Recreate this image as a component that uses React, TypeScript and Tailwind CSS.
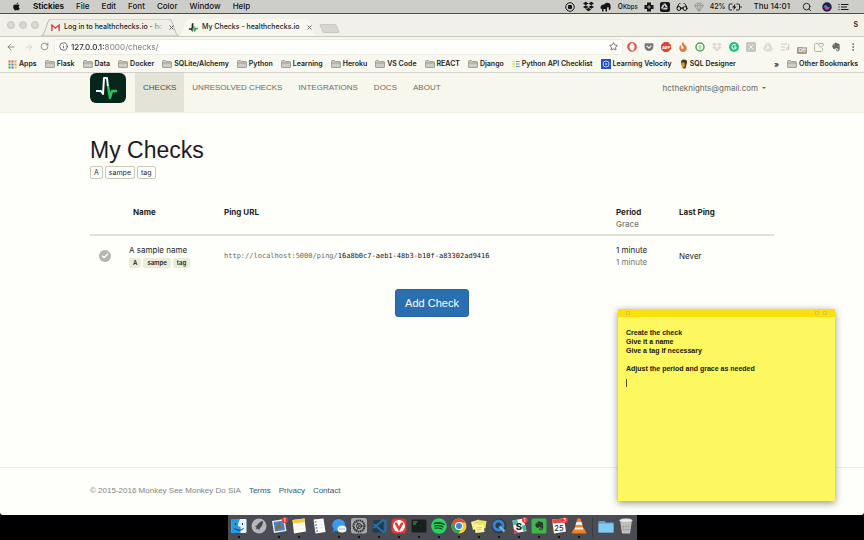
import React from "react";
import { FaApple, FaDropbox, FaGoogleDrive, FaEvernote, FaSpotify, FaOpera, FaGetPocket, FaFire } from "react-icons/fa";
import { ArrowLeft, ArrowRight, RotateCw, Info, Star, Search, Glasses, Gem, EllipsisVertical, ListMusic, Check, X } from "lucide-react";

function Folder() {
  return (
    <svg viewBox="0 0 20 16" className="h-2 w-[10px] shrink-0">
      <path d="M1 14V3q0-2 2-2h4l2 2h8q2 0 2 2v9q0 1-1 1H2q-1 0-1-1z" fill="#cdcdc6" stroke="#92928c" strokeWidth="1.6" />
      <path d="M1 6h18" stroke="#92928c" strokeWidth="1.6" />
    </svg>
  );
}

function PulseGlyph({ className }: { className: string }) {
  return (
    <svg viewBox="0 0 36 30" className={className}>
      <rect width="36" height="30" rx="6" fill="#05261a" />
      <path d="M6 18h5l2 3 1-16h3l1 9" fill="none" stroke="#fff" strokeWidth="2" strokeLinejoin="round" />
      <path d="M18 13l2 12 2-7h5" fill="none" stroke="#2ec05f" strokeWidth="2.4" strokeLinejoin="round" />
    </svg>
  );
}

function Elephant() {
  return (
    <svg viewBox="0 0 22 20" className="h-[10px] w-[11px]">
      <path d="M1 12q0-7 7-7l4-3q7-2 9 4 1 5-1 10h-2l-1-6-3 1v8h-3v-5H7v5H4v-6l-2 1z" fill="#141414" />
    </svg>
  );
}

function MenuBar() {
  const menus = ["File", "Edit", "Font", "Color", "Window", "Help"];
  return (
    <header className="flex h-[14px] items-center justify-between border-b border-[#4c4c48] bg-[#cdcdca] pl-3 pr-[15px] text-[8px] leading-[13px] font-medium text-[#151515]">
      <nav className="flex items-center gap-3">
        <FaApple className="size-[9px]" />
        <button className="font-bold">Stickies</button>
        {menus.map((m) => (
          <button key={m}>{m}</button>
        ))}
      </nav>
      <div className="flex items-center gap-[6px]">
        <svg viewBox="0 0 20 20" className="size-[10px]">
          <circle cx="10" cy="10" r="8.5" fill="none" stroke="#151515" strokeWidth="2" />
          <rect x="6" y="6" width="8" height="8" rx="2" fill="#151515" />
        </svg>
        <FaDropbox className="ml-[2px] size-[11px]" />
        <Elephant />
        <span className="flex items-baseline pl-px">0<small className="text-[6px]">Kbps</small></span>
        <svg viewBox="0 0 20 20" className="size-[10px]">
          <path d="M6 1h8v5h5v8h-5v5H6v-5H1V6h5z" fill="#151515" />
          <path d="M10 6v8M6 10h8" stroke="#cdcdca" strokeWidth="1.5" />
        </svg>
        <span className="flex size-[10px] items-center justify-center rounded-[2px] bg-[#151515] text-[#cdcdca]">
          <FaGoogleDrive className="size-[7px]" />
        </span>
        <Glasses className="size-3" />
        <Gem className="size-[10px] text-[#92928e]" />
        <span className="text-[7px]">42%</span>
        <svg viewBox="0 0 28 16" className="-ml-1 h-2 w-[14px]">
          <path d="M9 2H4Q2 2 2 4v8q0 2 2 2h4M17 2h4q2 0 2 2v8q0 2-2 2h-5M26 6v4" fill="none" stroke="#151515" strokeWidth="1.8" />
          <path d="M15 1l-7 8h4l-2 6 7-8h-4z" fill="#151515" />
        </svg>
        <time className="ml-[6px]">Thu 14:01</time>
        <Search className="ml-[6px] size-[10px]" />
        <svg viewBox="0 0 20 20" className="ml-1 size-[10px]">
          <circle cx="10" cy="10" r="9.5" fill="#23213f" />
          <path d="M3 11q3-8 7-3t7 0q-2 8-7 5t-7-2z" fill="#5a7be0" />
          <path d="M5 13q5-5 10 0-5 5-10 0z" fill="#d04d96" />
        </svg>
        <svg viewBox="0 0 22 16" className="h-2 w-[11px]">
          <path d="M1 3h2M6 3h15M1 8h2M6 8h12M1 13h2M6 13h15" stroke="#151515" strokeWidth="2" />
        </svg>
      </div>
    </header>
  );
}

function Tab({ title, active, icon }: { title: string; active?: boolean; icon: React.ReactNode }) {
  return (
    <div className="relative flex h-[17px] w-[138px] items-center gap-1 pl-[10px] pr-1">
      <svg viewBox="0 0 138 17" preserveAspectRatio="none" className="absolute inset-0 size-full">
        <path d="M0 17q2 0 3-3L7 3q1-3 3-3h118q2 0 3 3l4 11q1 3 3 3z" fill={active ? "#f8f8f1" : "#efefe5"} stroke={active ? "none" : "#bcbcb4"} strokeWidth="1" />
      </svg>
      <span className="relative shrink-0">{icon}</span>
      <button className="relative flex-1 text-left whitespace-nowrap">
        {title}
        {!active && <span className="absolute inset-y-0 right-0 w-4 bg-linear-to-r from-transparent to-[#efefe5]" />}
      </button>
      <button aria-label="Close tab" className="relative text-[#555]"><X className="size-[7px]" strokeWidth={3} /></button>
    </div>
  );
}

function TabStrip() {
  return (
    <div className="flex h-[23px] items-end border-b border-[#cacac3] bg-[#f1f1e8] pr-[6px] text-[7px] font-medium text-[#222]">
      <div className="flex gap-1 self-center pl-[7px] pr-[2px]">
        {[0, 1, 2].map((n) => (
          <span key={n} className="size-2 rounded-full border border-[#c9c9c3] bg-[#d8d8d2]" />
        ))}
      </div>
      <Tab
        title="Log in to healthchecks.io - hc"
        icon={
          <svg viewBox="0 0 20 15" className="h-[7px] w-[9px]">
            <path d="M2 15V2l8 7 8-7v13" fill="#fff" stroke="#d93a34" strokeWidth="3" />
          </svg>
        }
      />
      <Tab
        active
        title="My Checks - healthchecks.io"
        icon={
          <svg viewBox="0 0 18 18" className="size-[9px]">
            <path d="M0 12h5l1 2 1-12h2" fill="none" stroke="#222" strokeWidth="2.8" />
            <path d="M9 5l2 12 2-6h5" fill="none" stroke="#28a655" strokeWidth="2.8" />
          </svg>
        }
      />
      <button aria-label="New tab" className="mb-[3px] ml-[4px] h-[9px] w-[17px] skew-x-[22deg] rounded-[2px] border border-[#c8c8c0] bg-[#d7d7cf]" />
      <button className="ml-auto self-center text-[7px] font-semibold">S</button>
    </div>
  );
}

function Toolbar() {
  return (
    <div className="flex h-[19px] items-center bg-[#f8f8f1] pl-[6px] pr-[6px] text-[#777]">
      <button aria-label="Back" className="mr-2"><ArrowLeft className="size-[10px]" /></button>
      <button aria-label="Forward" className="mr-[6px] text-[#d2d2cc]"><ArrowRight className="size-[10px]" /></button>
      <button aria-label="Reload"><RotateCw className="size-[9px]" /></button>
      <div className="ml-[5px] flex h-4 flex-1 items-center gap-[3px] rounded-[2px] border border-[#ecece4] bg-[#fefefb] px-1">
        <Info className="size-[9px] text-[#444]" />
        <input
          aria-label="Address"
          defaultValue="127.0.0.1:8000/checks/"
          className="min-w-0 flex-1 bg-linear-to-r from-[#222] from-[33px] to-[#85857f] to-[33px] bg-clip-text text-[8px] leading-3 font-medium text-transparent outline-none"
        />
        <Star className="size-[9px] text-[#444]" />
      </div>
      <div className="ml-1 flex items-center gap-[7px] text-[#8c8c86]">
        <FaOpera className="size-[10px] text-[#e2534b]" />
        <FaGetPocket className="size-[10px] text-[#777]" />
        <svg viewBox="0 0 20 20" className="size-[10px]">
          <path d="M6 0h8l6 6v8l-6 6H6l-6-6V6z" fill="#dc4438" />
          <text x="10" y="13" textAnchor="middle" fontSize="8" fontWeight="700" fill="#fff">ABP</text>
        </svg>
        <FaFire className="size-[10px] text-[#e77a3c]" />
        <svg viewBox="0 0 20 20" className="size-[10px]">
          <circle cx="10" cy="10" r="8" fill="none" stroke="#4aa552" strokeWidth="3" />
          <rect x="7" y="6" width="6" height="8" rx="2" fill="#b9d9b6" />
        </svg>
        <FaDropbox className="size-[10px] text-[#d9d9d1]" />
        <svg viewBox="0 0 20 20" className="size-[10px]">
          <circle cx="10" cy="10" r="10" fill="#2bbd83" />
          <path d="M14 6q-6-4-8 3 0 8 8 4v-3h-4" fill="none" stroke="#fff" strokeWidth="2" />
        </svg>
        <svg viewBox="0 0 20 20" className="size-[10px]">
          <rect width="20" height="20" rx="3" fill="#c6c6bf" />
          <path d="M5 5l10 10M15 5L5 15" stroke="#efefe8" strokeWidth="2" />
        </svg>
        <FaGoogleDrive className="size-[10px] text-[#dcdcd5]" />
        <ListMusic className="size-[10px] text-[#c4c4bd]" />
        <span className="mt-2 rounded-[1px] bg-[#a89a83] px-px text-[5px] leading-[7px] font-semibold text-white">Off</span>
        <svg viewBox="0 0 20 20" className="size-[10px]">
          <path d="M8 3H3q-2 0-2 2v12q0 2 2 2h12q2 0 2-2v-5" fill="none" stroke="#b5b5ae" strokeWidth="2" />
          <path d="M14 11L9 6q0-5 5-3 5-2 5 3z" fill="none" stroke="#aaa" strokeWidth="2" />
        </svg>
        <FaEvernote className="size-[10px] text-[#686862]" />
        <EllipsisVertical className="size-[10px] text-[#555]" />
      </div>
    </div>
  );
}

function Bookmark({ label, icon }: { label: string; icon?: React.ReactNode }) {
  return (
    <a href="#" className="flex shrink-0 items-center gap-[2px]">
      {icon ?? <Folder />}
      {label}
    </a>
  );
}

function BookmarksBar() {
  const folders = ["Flask", "Data", "Docker", "SQLite/Alchemy", "Python", "Learning", "Heroku", "VS Code", "REACT", "Django"];
  const dots = ["#d9534f", "#d9534f", "#e8a33c", "#4a9e58", "#4a76c9", "#e8a33c", "#4a9e58", "#4a76c9", "#e8c13c"];
  return (
    <nav aria-label="Bookmarks" className="flex h-[17px] items-center gap-2 border-b border-[#d3d3cb] bg-[#f8f8f1] pl-2 pr-[6px] text-[7px] font-semibold text-[#1d1d1d]">
      <Bookmark
        label="Apps"
        icon={
          <svg viewBox="0 0 9 9" className="size-[9px]">
            {dots.map((c, i) => (
              <rect key={i} x={(i % 3) * 3 + 0.5} y={Math.floor(i / 3) * 3 + 0.5} width="2" height="2" fill={c} />
            ))}
          </svg>
        }
      />
      {folders.map((f) => (
        <Bookmark key={f} label={f} />
      ))}
      <Bookmark
        label="Python API Checklist"
        icon={
          <svg viewBox="0 0 16 16" className="size-2">
            <path d="M1 3h5M1 8h5M1 13h5" stroke="#eadb55" strokeWidth="3" />
            <path d="M8 3h7M8 8h7M8 13h7" stroke="#4a8bc4" strokeWidth="2" />
          </svg>
        }
      />
      <Bookmark
        label="Learning Velocity"
        icon={
          <svg viewBox="0 0 20 20" className="size-[10px]">
            <rect width="20" height="20" fill="#2450c8" />
            <circle cx="10" cy="10" r="6" fill="none" stroke="#b7cdf8" strokeWidth="2" />
            <circle cx="10" cy="10" r="2" fill="#b7cdf8" />
          </svg>
        }
      />
      <Bookmark
        label="SQL Designer"
        icon={
          <svg viewBox="0 0 16 20" className="h-[10px] w-2">
            <path d="M2 8Q1 1 8 1t6 6l-1 4-2 8H6z" fill="#4f3519" />
            <path d="M3 7h6l1 7-4 4q-4-3-3-11z" fill="#d59a35" />
          </svg>
        }
      />
      <button aria-label="More bookmarks" className="ml-auto text-[8px]">»</button>
      <Bookmark label="Other Bookmarks" />
    </nav>
  );
}

function SiteNav() {
  const links = ["CHECKS", "UNRESOLVED CHECKS", "INTEGRATIONS", "DOCS", "ABOUT"];
  return (
    <div className="border-b border-[#ededdf] bg-[#f7f7ee]">
      <div className="mx-auto flex h-[39px] w-full max-w-[684px] items-start text-[8px] leading-[30px] text-[#6b6b66]">
        <a href="#" aria-label="healthchecks.io" className="mr-[9px]">
          <PulseGlyph className="h-[30px] w-9" />
        </a>
        <nav className="flex h-full font-['Liberation_Sans',Arial,sans-serif]">
          {links.map((l, i) => (
            <a key={l} href="#" className={i === 0 ? "bg-[#e3e3d8] px-2 text-[#4c4c48]" : "px-2"}>
              {l}
            </a>
          ))}
        </nav>
        <button className="ml-auto flex items-center gap-1 pr-2 text-[8px]">
          hctheknights@gmail.com
          <span className="border-x-2 border-t-2 border-x-transparent border-t-[#6b6b66]" />
        </button>
      </div>
    </div>
  );
}

function ChecksPage() {
  const tags = ["A", "sampe", "tag"];
  return (
    <main className="mx-auto w-full max-w-[684px] flex-1 pt-6 text-[8px] leading-3 text-[#1f1f1f]">
      <h1 className="font-['Liberation_Sans',Arial,sans-serif] text-[23px] leading-[26px] text-[#1c1c1c]">My Checks</h1>
      <div className="mt-[3px] flex gap-[2px]">
        {tags.map((t) => (
          <button key={t} className="h-[13px] rounded-[2px] border border-[#c9c9b4] bg-white px-[3px] text-[7px] leading-[11px]">
            {t}
          </button>
        ))}
      </div>
      <table className="mt-[27px] w-full table-fixed text-left">
        <colgroup>
          <col className="w-[39px]" />
          <col className="w-[95px]" />
          <col />
          <col className="w-[63px]" />
          <col className="w-[95px]" />
        </colgroup>
        <thead>
          <tr className="border-b-2 border-[#e0e0d3] align-top">
            <th></th>
            <th className="pl-1">Name</th>
            <th>Ping URL</th>
            <th className="pb-1">
              Period
              <span className="block font-medium text-[#77776f]">Grace</span>
            </th>
            <th>Last Ping</th>
          </tr>
        </thead>
        <tbody>
          <tr>
            <td className="pl-[9px]">
              <span className="flex size-3 items-center justify-center rounded-full bg-[#b5b5ae]">
                <Check className="size-2 text-white" strokeWidth={4} />
              </span>
            </td>
            <td className="py-2">
              A sample name
              <span className="flex gap-[2px] pt-[2px]">
                {tags.map((t) => (
                  <span key={t} className="rounded-[2px] bg-[#ececd6] px-1 text-[6px] leading-[10px] font-semibold">
                    {t}
                  </span>
                ))}
              </span>
            </td>
            <td className="font-['DejaVu_Sans_Mono',monospace] text-[7px] text-[#6b6b64]">
              http://localhost:5000/ping/<span className="text-[#111]">16a8b0c7-aeb1-48b3-b10f-a83302ad9416</span>
            </td>
            <td>
              1 minute
              <span className="block text-[#77776f]">1 minute</span>
            </td>
            <td>Never</td>
          </tr>
        </tbody>
      </table>
      <div className="flex justify-center pt-[13px]">
        <button className="h-7 rounded-[3px] border border-[#2a63a0] bg-[#2a6fb0] px-[9px] font-['Liberation_Sans',Arial,sans-serif] text-[11px] text-white">
          Add Check
        </button>
      </div>
    </main>
  );
}

function SiteFooter() {
  return (
    <footer className="h-12 border-t border-[#ecece4]">
      <div className="mx-auto flex w-full max-w-[684px] gap-2 pt-[17px] font-['Liberation_Sans',Arial,sans-serif] text-[8px] leading-3 text-[#85857e]">
        <span>© 2015-2016 Monkey See Monkey Do SIA</span>
        {["Terms", "Privacy", "Contact"].map((l) => (
          <a key={l} href="#" className="text-[#2a5a78]">{l}</a>
        ))}
      </div>
    </footer>
  );
}

function StickyNote() {
  return (
    <section aria-label="Sticky note" className="absolute top-[309px] right-[29px] flex h-[192px] w-[217px] flex-col bg-[#fdf85f] shadow-[0_2px_7px_rgba(60,60,40,0.55)]">
      <div className="flex h-2 items-center gap-1 bg-[#fbe00e] px-2">
        <button aria-label="Close note" className="mr-auto h-[4px] w-[4px] border border-[#d9c63f]" />
        <button aria-label="Zoom note" className="h-[4px] w-[4px] border border-[#d9c63f]" />
        <button aria-label="Collapse note" className="h-[4px] w-[4px] border border-[#d9c63f]" />
      </div>
      <label className="relative flex flex-1 px-2 pt-[11px]">
        <span className="sr-only">Note text</span>
        <textarea
          defaultValue={"Create the check\nGive it a name\nGive a tag if necessary\n\nAdjust the period and grace as needed\n"}
          className="flex-1 resize-none font-['Liberation_Sans',Arial,sans-serif] text-[7px] leading-[9px] font-bold text-[#16160c] outline-none"
        />
        <span className="absolute top-[62px] left-2 h-2 w-px bg-[#4a4a22]" />
      </label>
    </section>
  );
}

function DockItem({ name, running = true, badge, children }: { name: string; running?: boolean; badge?: string; children: React.ReactNode }) {
  return (
    <button aria-label={name} className="relative flex flex-col items-center">
      <svg viewBox="0 0 32 32" className="size-4">{children}</svg>
      <span className={running ? "mt-[2px] size-[2px] rounded-full bg-black" : "mt-[2px] size-[2px]"} />
      {badge && <span className="absolute -top-px -right-px size-[6px] rounded-full bg-[#ee3436] text-center text-[5px] leading-[6px] text-white">{badge}</span>}
    </button>
  );
}

function Dock() {
  return (
    <div className="flex justify-center bg-black">
      <div className="flex h-[25px] items-start gap-1 bg-[#4b4b53] px-[3px] pt-[3px]">
        <DockItem name="Finder">
          <rect x="1" y="2" width="30" height="28" rx="2" fill="#e9f1f8" />
          <path d="M3 2h15q-5 8-4 15h5v13H3q-2 0-2-2V4q0-2 2-2z" fill="#219ae8" />
          <path d="M7 21q9 7 18 0M9 10v4M23 10v4" fill="none" stroke="#17304f" strokeWidth="2" />
        </DockItem>
        <DockItem name="Launchpad" running={false}>
          <circle cx="16" cy="16" r="15" fill="#b3b6ba" />
          <path d="M24 6q-8 1-12 9l-4 1 3 3-1 4 4-2 2 4 2-5q6-5 6-14z" fill="#454a50" />
        </DockItem>
        <DockItem name="Mail" badge="1">
          <path d="M2 6l25-4 4 24-25 4z" fill="#f1f4f7" />
          <path d="M5 8l20-3 3 19-20 3z" fill="#4387cb" />
          <path d="M8 20l9-12 2 7 6 3-8 2-4 4z" fill="#8c6b41" />
        </DockItem>
        <DockItem name="Notes">
          <path d="M3 4l24-3 3 26-24 4z" fill="#fffdf1" />
          <path d="M3 4l24-3 1 7-24 3z" fill="#fdc82d" />
          <path d="M7 17l18-2M8 23l18-2" stroke="#ddd" strokeWidth="1" />
        </DockItem>
        <DockItem name="Reminders" running={false}>
          <path d="M5 3l20-2 4 27-20 3z" fill="#fff" />
          <circle cx="9" cy="8" r="2" fill="#ef7d38" />
          <circle cx="10" cy="14" r="2" fill="#49a8ea" />
          <circle cx="11" cy="20" r="2" fill="#50bb57" />
          <circle cx="12" cy="26" r="2" fill="#c965bb" />
          <path d="M14 8l10-1M15 14l10-1M16 20l10-1" stroke="#ccc" />
        </DockItem>
        <DockItem name="Messages">
          <path d="M14 2a14 12 0 1 1-5 23l-6 3 3-6A13 12 0 0 1 14 2z" fill="#3699f5" />
          <ellipse cx="22" cy="22" rx="9" ry="7" fill="#f5faff" />
          <path d="M17 22h2M21 22h2M25 22h2" stroke="#3976c2" strokeWidth="2" />
        </DockItem>
        <DockItem name="System Preferences">
          <rect width="32" height="31" rx="5" fill="#a7a8ac" />
          <circle cx="16" cy="16" r="11" fill="none" stroke="#333438" strokeWidth="4" strokeDasharray="3 1" />
          <circle cx="16" cy="16" r="5" fill="none" stroke="#333438" strokeWidth="2" />
          <path d="M16 16l10 0M16 16l-5-9M16 16l-5 9" stroke="#333438" strokeWidth="2" />
        </DockItem>
        <DockItem name="Visual Studio Code">
          <path d="M5 4h20v25H3z" fill="#24384f" />
          <path d="M24 4L10 16l14 12 5-2V6zM10 16l-5-4M10 16l-5 4" fill="none" stroke="#2273ad" strokeWidth="4" />
        </DockItem>
        <DockItem name="Vivaldi">
          <rect x="1" y="1" width="30" height="30" rx="8" fill="#ec3636" />
          <circle cx="16" cy="16" r="12" fill="#fff" />
          <path d="M10 11l6 11 6-11" fill="none" stroke="#ec3636" strokeWidth="5" strokeLinecap="round" />
        </DockItem>
        <DockItem name="Terminal">
          <rect x="1" y="3" width="30" height="26" rx="3" fill="#17201b" />
          <path d="M4 8h9M4 12h6" stroke="#47ad58" strokeWidth="2" />
        </DockItem>
        <DockItem name="Spotify">
          <circle cx="16" cy="16" r="14" fill="#10331c" />
          <FaSpotify size={32} color="#28d45d" />
        </DockItem>
        <DockItem name="Chrome">
          <circle cx="16" cy="16" r="15" fill="#f8c934" />
          <path d="M3 9A15 15 0 0 1 29 9H16l-6 10z" fill="#df4c3e" />
          <path d="M3 9l7 11 9 3-4 8A15 15 0 0 1 3 9z" fill="#2da456" />
          <circle cx="16" cy="16" r="8" fill="#fff" />
          <circle cx="16" cy="16" r="6" fill="#4285d7" />
        </DockItem>
        <DockItem name="Stickies">
          <path d="M0 8l16-5 3 16-15 5z" fill="#faef83" />
          <path d="M15 4l16 2-2 15-14-2z" fill="#ece05e" />
          <path d="M7 15l18-2 2 15-18 2z" fill="#fff4a0" />
          <path d="M6 10l9-2M11 20l11-1M12 24l8-1" stroke="#aa9f48" />
        </DockItem>
        <DockItem name="QuickTime Player">
          <circle cx="16" cy="16" r="15" fill="#34383f" />
          <circle cx="15" cy="15" r="9" fill="none" stroke="#2c86dc" strokeWidth="6" />
          <path d="M17 17l10 10" stroke="#76abd8" strokeWidth="5" />
        </DockItem>
        <DockItem name="Slack" badge="1">
          <path d="M3 5l22-4 6 25-24 5z" fill="#f8f8f5" />
          <path d="M3 5l9-2 3 9-10 3z" fill="#52bba1" />
          <path d="M24 26l7-1-3-11-6 1z" fill="#3eb890" />
          <path d="M7 31l-2-9 10 7z" fill="#df3768" />
          <text x="16" y="23" textAnchor="middle" fontSize="19" fontWeight="800" fill="#222">S</text>
        </DockItem>
        <DockItem name="Evernote">
          <rect x="1" y="1" width="30" height="30" rx="3" fill="#3fb54a" />
          <FaEvernote x="6" y="5" size={21} color="#27382b" />
        </DockItem>
        <DockItem name="Calendar" badge="3">
          <path d="M2 3l24-2 4 26-24 4z" fill="#fff" />
          <path d="M2 3l24-2 1 8-24 2z" fill="#e44a43" />
          <text x="16" y="25" textAnchor="middle" fontSize="15" fontWeight="500" fill="#222">25</text>
        </DockItem>
        <DockItem name="VLC">
          <path d="M5 22h22l4 9H1z" fill="#ef7e21" />
          <path d="M13 1h6l7 24q-10 5-20 0z" fill="#f18726" />
          <path d="M11 8h10l2 6H9zM8 19h16l1 4H7z" fill="#f4eee8" />
        </DockItem>
        <span className="mx-px h-[19px] w-px bg-[#39393f]" />
        <DockItem name="Downloads" running={false}>
          <path d="M1 6h12l3 3h15v20H1z" fill="#55a5d3" />
          <path d="M1 11h30v18H1z" fill="#82caef" />
        </DockItem>
        <DockItem name="Trash" running={false}>
          <path d="M4 4h24l-4 27H8z" fill="#c5c5c2" />
          <ellipse cx="16" cy="5" rx="13" ry="4" fill="#e8e8e5" stroke="#9b9b98" />
          <path d="M10 11l2 17M16 11v17M22 11l-2 17M7 17h18M8 23h16" stroke="#92928e" />
        </DockItem>
      </div>
    </div>
  );
}

export default function App() {
  return (
    <div className="relative flex min-h-screen flex-col bg-black font-['Inter','Liberation_Sans',sans-serif]">
      <MenuBar />
      <div className="flex flex-1 flex-col overflow-hidden rounded-b-[3px] bg-[#fefefa]">
        <TabStrip />
        <Toolbar />
        <BookmarksBar />
        <SiteNav />
        <ChecksPage />
        <SiteFooter />
      </div>
      <Dock />
      <StickyNote />
    </div>
  );
}
